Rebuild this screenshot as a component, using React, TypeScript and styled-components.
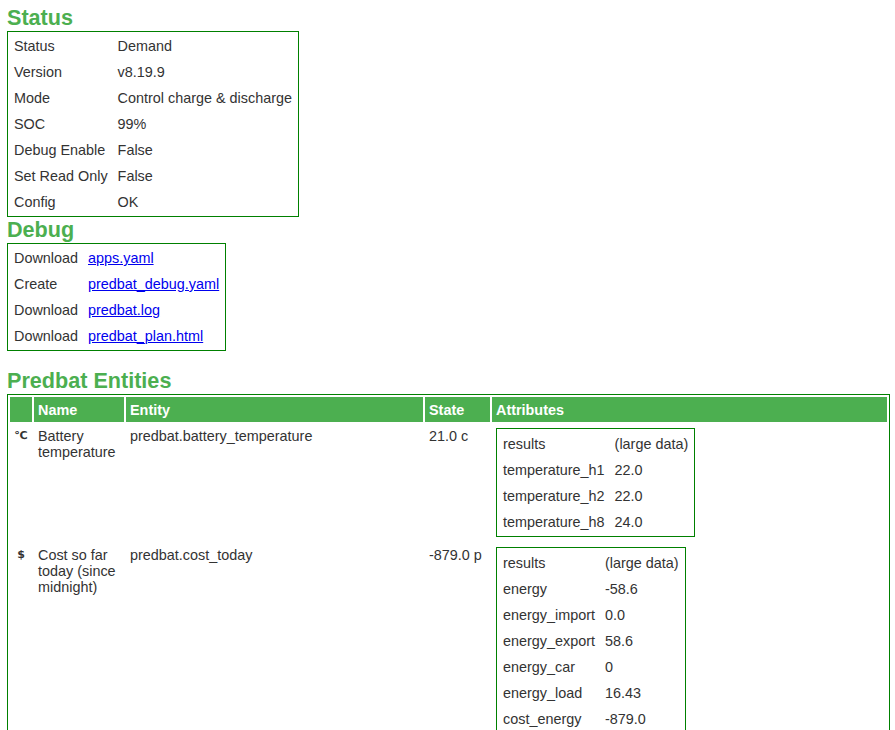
import React from "react";
import styled, { createGlobalStyle } from "styled-components";

const GlobalStyle = createGlobalStyle`
  html, body {
    margin: 0;
    padding: 0;
    background: #ffffff;
  }
  body {
    font-family: "Liberation Sans", Arial, sans-serif;
    font-size: 14.4px;
    color: #333333;
  }
`;

const Page = styled.div`
  padding: 5px 5px 0 7px;
`;

const Heading = styled.h2<{ $gap?: number }>`
  margin: ${(p) => p.$gap ?? 0}px 0 0 0;
  font-size: 21.6px;
  line-height: 26px;
  font-weight: bold;
  color: #4caf50;
`;

const InfoTable = styled.table<{ $padTop?: number }>`
  border: 1px solid green;
  border-spacing: 2px;
  border-collapse: separate;
  padding-top: ${(p) => p.$padTop ?? 0}px;
`;

const Cell = styled.td`
  padding: 4px;
  text-align: left;
  vertical-align: top;
  line-height: 16px;
`;

const Link = styled.a`
  color: #0000ee;
  text-decoration: underline;
`;

const EntityTable = styled.table`
  width: 100%;
  table-layout: fixed;
  border: 1px solid green;
  border-spacing: 2px;
  border-collapse: separate;
`;

const Col = styled.col<{ $w?: number }>`
  width: ${(p) => (p.$w ? `${p.$w}px` : "auto")};
`;

const HeadCell = styled.th`
  background: #4caf50;
  color: #ffffff;
  font-weight: bold;
  text-align: left;
  padding: 5px 4px 4px 4px;
  line-height: 16px;
`;

const IconCell = styled.td`
  padding: 4px 0;
  text-align: center;
  vertical-align: top;
  font-family: "DejaVu Sans", "Liberation Sans", sans-serif;
  font-size: 11px;
  font-weight: bold;
  line-height: 16px;
  color: #333333;
`;

type KV = [string, string];

const statusRows: KV[] = [
  ["Status", "Demand"],
  ["Version", "v8.19.9"],
  ["Mode", "Control charge & discharge"],
  ["SOC", "99%"],
  ["Debug Enable", "False"],
  ["Set Read Only", "False"],
  ["Config", "OK"],
];

const debugRows: KV[] = [
  ["Download", "apps.yaml"],
  ["Create", "predbat_debug.yaml"],
  ["Download", "predbat.log"],
  ["Download", "predbat_plan.html"],
];

interface Entity {
  icon: string;
  name: string;
  id: string;
  state: string;
  attrs: KV[];
}

const entities: Entity[] = [
  {
    icon: "℃",
    name: "Battery temperature",
    id: "predbat.battery_temperature",
    state: "21.0 c",
    attrs: [
      ["results", "(large data)"],
      ["temperature_h1", "22.0"],
      ["temperature_h2", "22.0"],
      ["temperature_h8", "24.0"],
    ],
  },
  {
    icon: "$",
    name: "Cost so far today (since midnight)",
    id: "predbat.cost_today",
    state: "-879.0 p",
    attrs: [
      ["results", "(large data)"],
      ["energy", "-58.6"],
      ["energy_import", "0.0"],
      ["energy_export", "58.6"],
      ["energy_car", "0"],
      ["energy_load", "16.43"],
      ["cost_energy", "-879.0"],
      ["cost_import", "0.0"],
      ["cost_export", "-879.0"],
      ["cost_car", "0.0"],
    ],
  },
];

const KVTable: React.FC<{ rows: KV[]; padTop?: number }> = ({ rows, padTop }) => (
  <InfoTable $padTop={padTop}>
    <tbody>
      {rows.map(([k, v], i) => (
        <tr key={i}>
          <Cell>{k}</Cell>
          <Cell>{v}</Cell>
        </tr>
      ))}
    </tbody>
  </InfoTable>
);

export default function App() {
  return (
    <>
      <GlobalStyle />
      <Page>
        <Heading>Status</Heading>
        <KVTable rows={statusRows} />

        <Heading>Debug</Heading>
        <InfoTable>
          <tbody>
            {debugRows.map(([k, v], i) => (
              <tr key={i}>
                <Cell>{k}</Cell>
                <Cell>
                  <Link href="#">{v}</Link>
                </Cell>
              </tr>
            ))}
          </tbody>
        </InfoTable>

        <Heading $gap={17}>Predbat Entities</Heading>
        <EntityTable>
          <colgroup>
            <Col $w={22} />
            <Col $w={90} />
            <Col $w={297} />
            <Col $w={65} />
            <Col />
          </colgroup>
          <thead>
            <tr>
              <HeadCell></HeadCell>
              <HeadCell>Name</HeadCell>
              <HeadCell>Entity</HeadCell>
              <HeadCell>State</HeadCell>
              <HeadCell>Attributes</HeadCell>
            </tr>
          </thead>
          <tbody>
            {entities.map((e) => (
              <tr key={e.id}>
                <IconCell>{e.icon}</IconCell>
                <Cell>{e.name}</Cell>
                <Cell>{e.id}</Cell>
                <Cell>{e.state}</Cell>
                <Cell>
                  <KVTable rows={e.attrs} padTop={1} />
                </Cell>
              </tr>
            ))}
          </tbody>
        </EntityTable>
      </Page>
    </>
  );
}
